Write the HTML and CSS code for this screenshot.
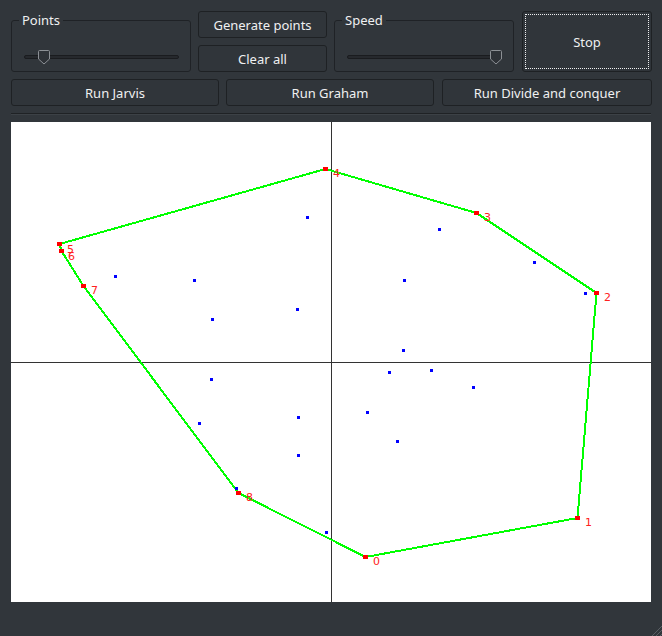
FILE: index.html
```html
<!DOCTYPE html>
<html>
<head>
<meta charset="utf-8">
<link rel="stylesheet" href="styles.css">
</head>
<body>
<div class="window">
  <div class="row-top">
    <fieldset class="group">
      <legend>Points</legend>
      <svg class="slider" width="156" height="16" viewBox="0 0 156 16">
        <rect x="0.5" y="6.5" width="154" height="3" rx="1.5" class="track"/>
        <path class="handle" transform="translate(14,1)" d="M0.5,1.5 Q0.5,0.5 1.5,0.5 H10.5 Q11.5,0.5 11.5,1.5 V9 L6,14 L0.5,9 Z"/>
      </svg>
    </fieldset>
    <div class="btn-col">
      <button class="btn">Generate points</button>
      <button class="btn">Clear all</button>
    </div>
    <fieldset class="group">
      <legend>Speed</legend>
      <svg class="slider" width="156" height="16" viewBox="0 0 156 16">
        <rect x="0.5" y="6.5" width="154" height="3" rx="1.5" class="track"/>
        <path class="handle" transform="translate(143,1)" d="M0.5,1.5 Q0.5,0.5 1.5,0.5 H10.5 Q11.5,0.5 11.5,1.5 V9 L6,14 L0.5,9 Z"/>
      </svg>
    </fieldset>
    <button class="btn stop">Stop</button>
  </div>
  <div class="row-run">
    <button class="btn run">Run Jarvis</button>
    <button class="btn run">Run Graham</button>
    <button class="btn run wide">Run Divide and conquer</button>
  </div>
  <div class="frame">
    <svg class="canvas" width="640" height="480" viewBox="0 0 640 480">
      <rect x="0" y="0" width="640" height="480" fill="#ffffff"/>
      <g shape-rendering="crispEdges" stroke="#333333" stroke-width="1">
        <line x1="320.5" y1="0" x2="320.5" y2="480"/>
        <line x1="0" y1="240.5" x2="640" y2="240.5"/>
      </g>
      <polygon fill="none" stroke="#00ff00" stroke-width="2" shape-rendering="crispEdges"
        points="354.5,435 566.5,396 585.5,171 465.5,91 314.5,47 48.5,122 50.5,129 72.5,164 227.5,371"/>
      <g fill="#ff0000" shape-rendering="crispEdges">
        <rect x="352" y="433" width="5" height="4"/>
        <rect x="564" y="394" width="5" height="4"/>
        <rect x="583" y="169" width="5" height="4"/>
        <rect x="463" y="89" width="5" height="4"/>
        <rect x="312" y="45" width="5" height="4"/>
        <rect x="46" y="120" width="5" height="4"/>
        <rect x="48" y="127" width="5" height="4"/>
        <rect x="70" y="162" width="5" height="4"/>
        <rect x="225" y="369" width="5" height="4"/>
      </g>
      <g fill="#0000ff" shape-rendering="crispEdges">
        <rect x="295" y="94" width="3" height="3"/>
        <rect x="427" y="106" width="3" height="3"/>
        <rect x="522" y="139" width="3" height="3"/>
        <rect x="103" y="153" width="3" height="3"/>
        <rect x="182" y="157" width="3" height="3"/>
        <rect x="392" y="157" width="3" height="3"/>
        <rect x="573" y="170" width="3" height="3"/>
        <rect x="285" y="186" width="3" height="3"/>
        <rect x="200" y="196" width="3" height="3"/>
        <rect x="391" y="227" width="3" height="3"/>
        <rect x="377" y="249" width="3" height="3"/>
        <rect x="419" y="247" width="3" height="3"/>
        <rect x="199" y="256" width="3" height="3"/>
        <rect x="461" y="264" width="3" height="3"/>
        <rect x="355" y="289" width="3" height="3"/>
        <rect x="286" y="294" width="3" height="3"/>
        <rect x="187" y="300" width="3" height="3"/>
        <rect x="385" y="318" width="3" height="3"/>
        <rect x="286" y="332" width="3" height="3"/>
        <rect x="224" y="365" width="3" height="3"/>
        <rect x="314" y="409" width="3" height="3"/>
      </g>
      <g class="labels">
        <text x="362" y="443">0</text>
        <text x="574" y="404">1</text>
        <text x="593" y="179">2</text>
        <text x="473" y="99">3</text>
        <text x="322" y="55">4</text>
        <text x="56" y="131">5</text>
        <text x="57" y="138">6</text>
        <text x="80" y="172">7</text>
        <text x="235" y="379">8</text>
      </g>
    </svg>
  </div>
  <svg class="grip" width="12" height="12" viewBox="0 0 12 12">
    <g stroke="#5a5f64" stroke-width="1">
      <line x1="12" y1="2" x2="2" y2="12"/>
      <line x1="12" y1="6" x2="6" y2="12"/>
      <line x1="12" y1="10" x2="10" y2="12"/>
    </g>
  </svg>
</div>
</body>
</html>
```
FILE: styles.css
```css
html, body {
  margin: 0;
  padding: 0;
  background: #31363b;
}
body {
  width: 662px;
  height: 636px;
  overflow: hidden;
  font-family: "Noto Sans", "DejaVu Sans", sans-serif;
  font-size: 13px;
  color: #eff0f1;
}
.window {
  position: relative;
  width: 662px;
  height: 636px;
  box-sizing: border-box;
  padding: 11px 10px 0 11px;
}
.row-top {
  display: flex;
  height: 61px;
}
.group {
  box-sizing: border-box;
  width: 180px;
  margin: 1px 0 0 0;
  padding: 0 11px 0 12px;
  border: 1px solid #1f2226;
  border-radius: 3px;
  min-inline-size: 0;
}
.group legend {
  margin-left: -5px;
  padding: 0 3px;
  line-height: 16px;
  font-size: 13px;
  color: #eff0f1;
}
.slider {
  display: block;
  margin-top: 21px;
}
.track {
  fill: #26292d;
  stroke: #1a1c1f;
  stroke-width: 1;
}
.handle {
  fill: #2e3237;
  stroke: #8c9095;
  stroke-width: 1;
}
.btn-col {
  display: flex;
  flex-direction: column;
  gap: 7px;
  width: 129px;
  margin: 0 7px;
}
.btn-col + .group {
  margin-right: 8px;
}
.btn {
  box-sizing: border-box;
  height: 27px;
  margin: 0;
  padding: 0;
  background: #30353a;
  border: 1px solid #1e2124;
  border-radius: 3px;
  color: #eff0f1;
  font-family: "Noto Sans", "DejaVu Sans", sans-serif;
  font-size: 13px;
  text-align: center;
}
.stop {
  width: 130px;
  height: 61px;
  outline: 1px dotted #eff0f1;
  outline-offset: -4px;
}
.row-run {
  display: flex;
  gap: 7px;
  margin-top: 7px;
}
.run {
  width: 208px;
}
.run.wide {
  width: 210px;
  margin-left: 1px;
}
.frame {
  margin-top: 7px;
  width: 640px;
  border-top: 1px solid #1f2225;
  box-shadow: inset 0 1px 0 #3c4146;
  padding-top: 8px;
}
.canvas {
  display: block;
}
.labels text {
  font-family: "DejaVu Sans", sans-serif;
  font-size: 11px;
  fill: #ff2020;
}
.grip {
  position: absolute;
  right: 0;
  bottom: 0;
}
```
